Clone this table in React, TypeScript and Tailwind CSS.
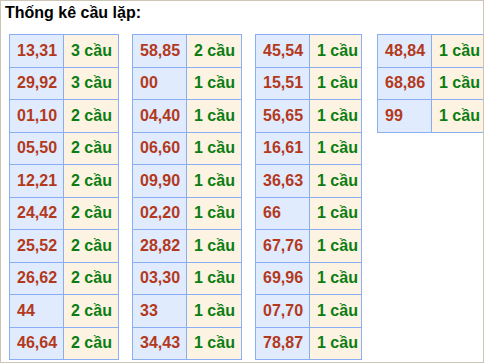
const tables: [string, number][][] = [
  [
    ["13,31", 3],
    ["29,92", 3],
    ["01,10", 2],
    ["05,50", 2],
    ["12,21", 2],
    ["24,42", 2],
    ["25,52", 2],
    ["26,62", 2],
    ["44", 2],
    ["46,64", 2],
  ],
  [
    ["58,85", 2],
    ["00", 1],
    ["04,40", 1],
    ["06,60", 1],
    ["09,90", 1],
    ["02,20", 1],
    ["28,82", 1],
    ["03,30", 1],
    ["33", 1],
    ["34,43", 1],
  ],
  [
    ["45,54", 1],
    ["15,51", 1],
    ["56,65", 1],
    ["16,61", 1],
    ["36,63", 1],
    ["66", 1],
    ["67,76", 1],
    ["69,96", 1],
    ["07,70", 1],
    ["78,87", 1],
  ],
  [
    ["48,84", 1],
    ["68,86", 1],
    ["99", 1],
  ],
];

const widths = ["w-[110px]", "w-[110px]", "w-[107px]", "ml-[2px] w-[110px]"];

function CauTable({ rows, cls }: { rows: [string, number][]; cls: string }) {
  return (
    <div className={`${cls} shrink-0 self-start border-t border-l border-[#8aaef2]`}>
      {rows.map(([pair, n]) => (
        <div key={pair} className="flex h-[32.5px]">
          <div className="flex w-[54px] items-center border-r border-b border-[#8aaef2] bg-[#e0ebfd] pl-[7px] text-[#b3391c]">
            {pair}
          </div>
          <div className="flex flex-1 items-center border-r border-b border-[#8aaef2] bg-[#fdf3e2] pl-[7px] text-[#0b7d12]">
            {n} cầu
          </div>
        </div>
      ))}
    </div>
  );
}

export default function App() {
  return (
    <div className="h-[363px] w-[484px] overflow-hidden border border-[#cdc5b6] bg-white font-['Liberation_Sans',Arial,sans-serif] text-[16px] font-bold">
      <p className="pt-[3px] pl-[4px] leading-[18px] text-black">Thống kê cầu lặp:</p>
      <div className="mt-[12px] ml-[8px] flex gap-[13px]">
        {tables.map((rows, i) => (
          <CauTable key={i} rows={rows} cls={widths[i]} />
        ))}
      </div>
    </div>
  );
}
